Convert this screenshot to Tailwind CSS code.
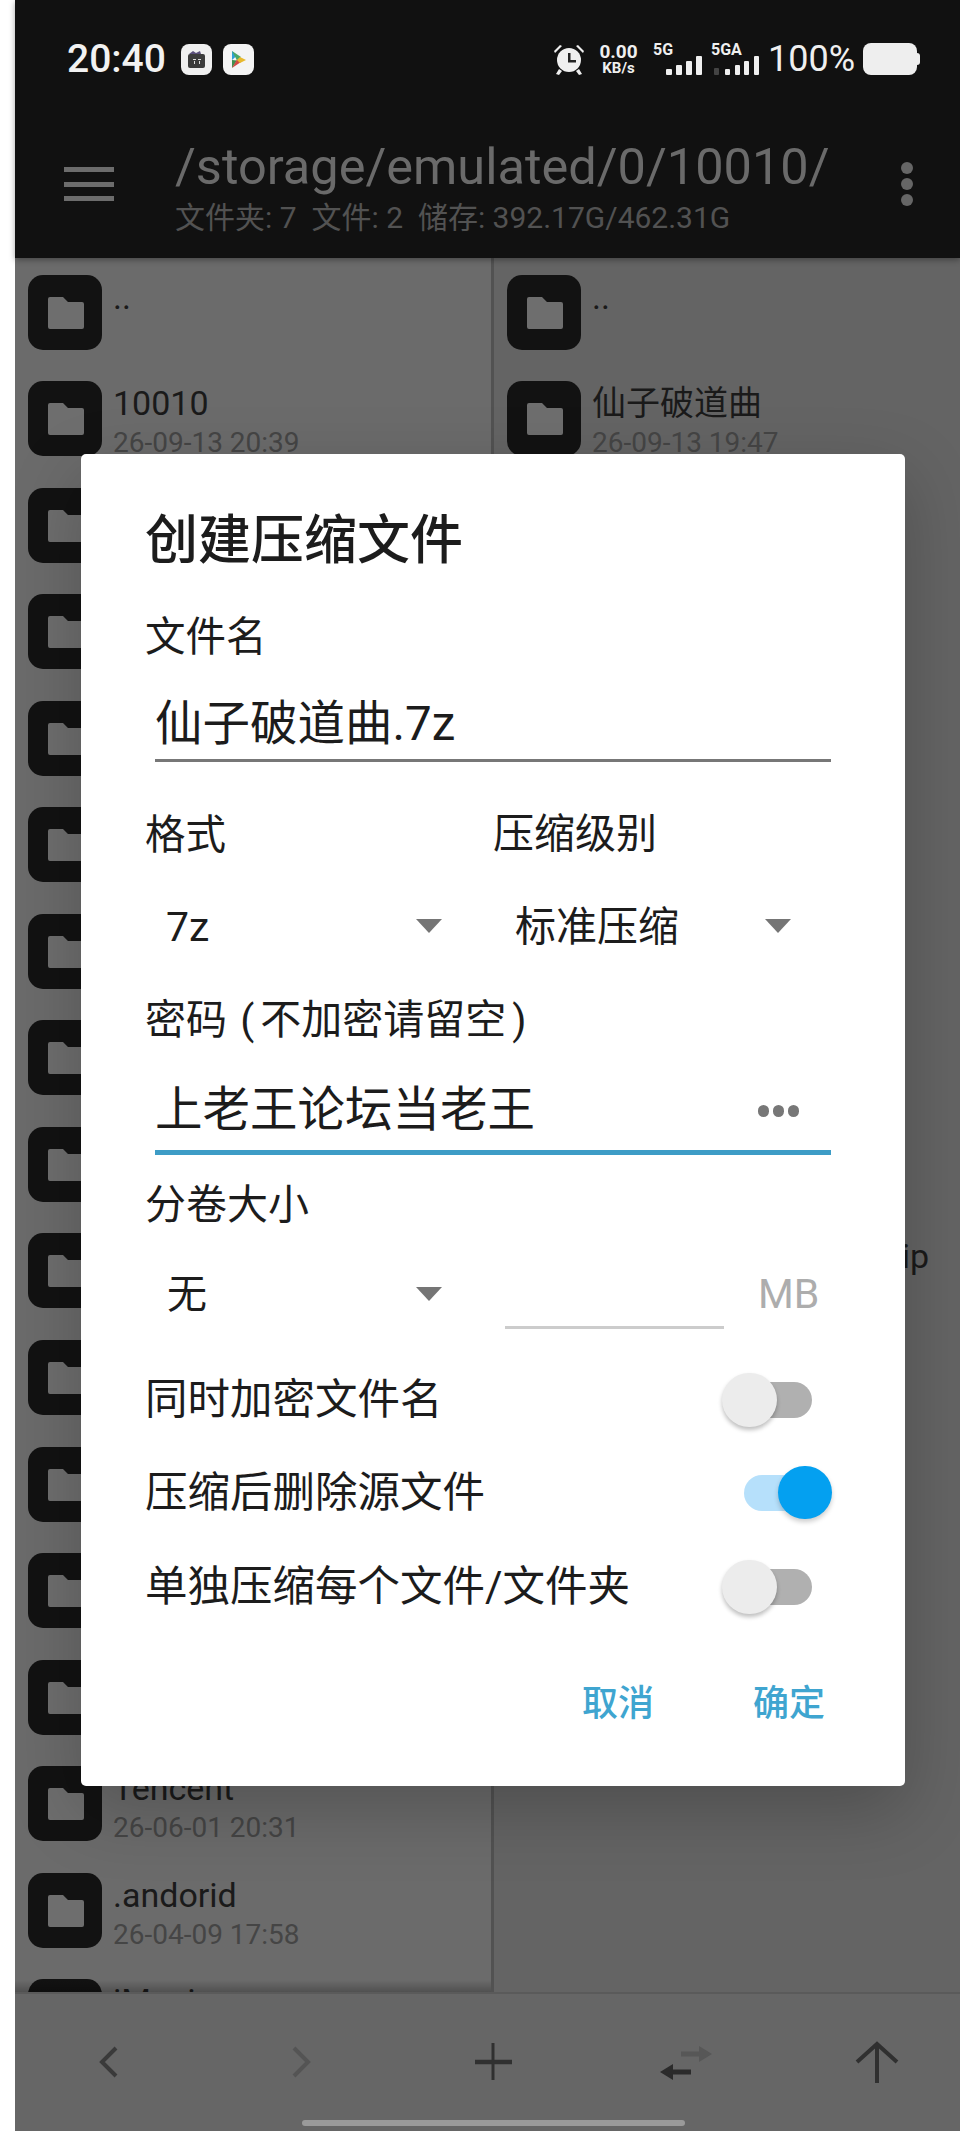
<!DOCTYPE html>
<html lang="zh-CN">
<head>
<meta charset="utf-8">
<script src="https://cdn.jsdelivr.net/npm/@tailwindcss/browser@4"></script>
</head>
<body class="bg-white">
<svg class="hidden"><defs>
<symbol id="fd" viewBox="0 0 74 75"><rect width="74" height="75" rx="15" fill="#121212"/><path d="M20 24a2 2 0 0 1 2-2h13l5 5h14a2 2 0 0 1 2 2v23a2 2 0 0 1-2 2H22a2 2 0 0 1-2-2z" fill="#6e6e6e"/></symbol>
</defs></svg>
<div class="relative w-[960px] h-[2131px] overflow-hidden bg-white font-['Roboto','Noto_Sans_CJK_SC',sans-serif]">
  <div class="ml-[15px] h-full flex flex-col bg-[#666666]">
    <!-- header -->
    <header class="h-[258px] shrink-0 bg-[#111111] z-10 shadow-[0_2px_6px_rgba(0,0,0,0.35)]">
      <div class="flex items-center justify-between pt-[43px] pl-[52px] pr-[40px] h-[75px]">
        <div class="flex items-center">
          <span class="text-[39px] leading-[32px] font-medium text-[#f2f2f2] w-[114px]">20:40</span>
          <div class="w-[31px] h-[31px] rounded-lg bg-[#f0f0f0] flex items-center justify-center">
            <svg width="23" height="23" viewBox="0 0 23 23"><path d="M4 6l4-3 3 2 4-2 1 3z" fill="#5a4f7a"/><rect x="3" y="6" width="17" height="14" rx="2" fill="#3c3c3c"/><path d="M8 11h3v1H8zM13 11h3v1h-3zM9 13h1v3H9zM14 13h1v3h-1z" fill="#ddd"/></svg>
          </div>
          <div class="w-[31px] h-[31px] rounded-lg bg-[#f4f4f4] ml-[11px] flex items-center justify-center">
            <svg width="23" height="23" viewBox="0 0 23 23"><path d="M5 3v9l5-4.500z" fill="#2f9fd6"/><path d="M5 12v8l5-7.500z" fill="#3f8f4f"/><path d="M5 3l9 6-4 3.500z" fill="#4aa768"/><path d="M5 20l9-6-4-2.500z" fill="#d24a43"/><path d="M13 9l6 3-6 3-3-3z" fill="#e8b92e"/></svg>
          </div>
        </div>
        <div class="flex items-center text-[#efefef]">
          <svg width="32" height="33" viewBox="0 0 32 33" fill="#efefef"><path d="M1 8l6-6 2 1-7 7zM31 8l-6-6-2 1 7 7z"/><circle cx="16" cy="17" r="12"/><path d="M6 26l-3 5 3 1 3-4zM26 26l3 5-3 1-3-4z"/><path d="M15 10h2.500v7H23v2.500h-8z" fill="#222"/></svg>
          <div class="ml-[13px] w-[41px] flex flex-col items-center font-bold">
            <span class="text-[19px] leading-[18px]">0.00</span>
            <span class="text-[15px] leading-[14px]">KB/s</span>
          </div>
          <div class="relative ml-[14px] w-[49px] h-[32px]">
            <span class="absolute left-0 top-0 text-[16px] leading-[14px] font-bold">5G</span>
            <svg class="absolute left-[12px] top-[13px]" width="37" height="19" viewBox="0 0 37 19" fill="#efefef"><rect x="1" y="13" width="6" height="6" rx="1"/><rect x="11" y="9" width="6" height="10" rx="1"/><rect x="21" y="5" width="6" height="14" rx="1"/><rect x="31" y="0" width="6" height="19" rx="1"/></svg>
          </div>
          <div class="relative ml-[9px] w-[49px] h-[32px]">
            <span class="absolute left-0 top-0 text-[16px] leading-[14px] font-bold">5GA</span>
            <svg class="absolute left-0 top-[13px]" width="49" height="19" viewBox="0 0 49 19" fill="#efefef"><rect x="3" y="12" width="5" height="7" rx="1" fill="#444"/><rect x="14" y="13" width="5" height="6" rx="1"/><rect x="24" y="9" width="5" height="10" rx="1"/><rect x="33" y="5" width="5" height="14" rx="1"/><rect x="43" y="0" width="5" height="19" rx="1"/></svg>
          </div>
          <span class="ml-[8px] text-[36px] leading-[32px] w-[85px] whitespace-nowrap">100%</span>
          <div class="ml-[10px] flex items-center">
            <div class="w-[54px] h-[32px] rounded-[8px] bg-[#eeeeee]"></div>
            <div class="w-[3px] h-[12px] rounded-r-sm bg-[#eeeeee]"></div>
          </div>
        </div>
      </div>
      <div class="flex items-start mt-[64px] pl-[49px]">
        <div class="w-[50px] mt-[28px] flex flex-col gap-[9.500px] shrink-0">
          <div class="h-[5px] bg-[#6c6c6c]"></div>
          <div class="h-[5px] bg-[#6c6c6c]"></div>
          <div class="h-[5px] bg-[#6c6c6c]"></div>
        </div>
        <div class="ml-[61px] w-[720px]">
          <div class="text-[50.500px] leading-[56px] text-[#6a6a6a] whitespace-nowrap">/storage/emulated/0/10010/</div>
          <div class="mt-[6px] text-[30px] leading-[34px] text-[#525252] whitespace-pre">文件夹: 7  文件: 2  储存: 392.17G/462.31G</div>
        </div>
        <div class="mt-[23px] ml-[6px] flex flex-col gap-[4px]">
          <div class="w-[12px] h-[12px] rounded-full bg-[#666666]"></div>
          <div class="w-[12px] h-[12px] rounded-full bg-[#666666]"></div>
          <div class="w-[12px] h-[12px] rounded-full bg-[#666666]"></div>
        </div>
      </div>
    </header>

    <!-- panels -->
    <div class="h-[1734px] shrink-0 flex relative">
      <div class="w-[476px] bg-[#6b6b6b] overflow-hidden pt-[16.500px] pl-[13px] relative">
        <div class="h-[106.550px] flex"><svg width="74" height="75" class="shrink-0"><use href="#fd"/></svg><div class="ml-[11px]"><div class="text-[34px] leading-[44px] text-[#1a1a1a]">..</div></div></div>
        <div class="h-[106.550px] flex"><svg width="74" height="75" class="shrink-0"><use href="#fd"/></svg><div class="ml-[11px]"><div class="text-[34px] leading-[44px] text-[#1a1a1a]">10010</div><div class="text-[28px] leading-[36px] text-[#454545]">26-09-13 20:39</div></div></div>
        <div class="h-[106.550px]"><svg width="74" height="75"><use href="#fd"/></svg></div>
        <div class="h-[106.550px]"><svg width="74" height="75"><use href="#fd"/></svg></div>
        <div class="h-[106.550px]"><svg width="74" height="75"><use href="#fd"/></svg></div>
        <div class="h-[106.550px]"><svg width="74" height="75"><use href="#fd"/></svg></div>
        <div class="h-[106.550px]"><svg width="74" height="75"><use href="#fd"/></svg></div>
        <div class="h-[106.550px]"><svg width="74" height="75"><use href="#fd"/></svg></div>
        <div class="h-[106.550px]"><svg width="74" height="75"><use href="#fd"/></svg></div>
        <div class="h-[106.550px]"><svg width="74" height="75"><use href="#fd"/></svg></div>
        <div class="h-[106.550px]"><svg width="74" height="75"><use href="#fd"/></svg></div>
        <div class="h-[106.550px]"><svg width="74" height="75"><use href="#fd"/></svg></div>
        <div class="h-[106.550px]"><svg width="74" height="75"><use href="#fd"/></svg></div>
        <div class="h-[106.550px]"><svg width="74" height="75"><use href="#fd"/></svg></div>
        <div class="h-[106.550px] flex"><svg width="74" height="75" class="shrink-0"><use href="#fd"/></svg><div class="ml-[11px]"><div class="text-[34px] leading-[44px] text-[#1a1a1a]">Tencent</div><div class="text-[28px] leading-[36px] text-[#454545]">26-06-01 20:31</div></div></div>
        <div class="h-[106.550px] flex"><svg width="74" height="75" class="shrink-0"><use href="#fd"/></svg><div class="ml-[11px]"><div class="text-[34px] leading-[44px] text-[#1a1a1a]">.andorid</div><div class="text-[28px] leading-[36px] text-[#454545]">26-04-09 17:58</div></div></div>
        <div class="h-[106.550px] flex"><svg width="74" height="75" class="shrink-0"><use href="#fd"/></svg><div class="ml-[11px]"><div class="text-[34px] leading-[44px] text-[#1a1a1a]">iMusic</div></div></div>
        <div class="absolute left-0 right-0 bottom-0 h-[12px] bg-gradient-to-b from-transparent to-black/25"></div>
      </div>
      <div class="w-[3px] bg-[#525252]"></div>
      <div class="flex-1 bg-[#646464] overflow-hidden pt-[16.500px] pl-[13px]">
        <div class="h-[106.550px] flex"><svg width="74" height="75" class="shrink-0"><use href="#fd"/></svg><div class="ml-[11px]"><div class="text-[34px] leading-[44px] text-[#1a1a1a]">..</div></div></div>
        <div class="h-[106.550px] flex"><svg width="74" height="75" class="shrink-0"><use href="#fd"/></svg><div class="ml-[11px]"><div class="text-[34px] leading-[44px] text-[#1a1a1a]">仙子破道曲</div><div class="text-[28px] leading-[36px] text-[#454545]">26-09-13 19:47</div></div></div>
        <div class="h-[746px]"></div>
        <div class="h-[44px] pr-[31px] text-right text-[34px] leading-[44px] text-[#1a1a1a] whitespace-nowrap">仙子破道曲.zip</div>
      </div>
    </div>

    <!-- bottom bar -->
    <div class="flex-1 bg-[#666666] border-t-2 border-[#5a5a5a] z-10">
      <div class="flex justify-between pt-[47px] pl-[72px] pr-[61px]">
        <svg width="44" height="44" viewBox="0 0 44 44" fill="none" stroke="#3a3a3a" stroke-width="4"><path d="M29 7L15 21l14 14"/></svg>
        <svg width="44" height="44" viewBox="0 0 44 44" fill="none" stroke="#545454" stroke-width="4"><path d="M15 7l14 14-14 14"/></svg>
        <svg width="44" height="44" viewBox="0 0 44 44" fill="none" stroke="#303030"><path d="M4 21h37" stroke-width="4.500"/><path d="M22 2v37" stroke-width="3"/></svg>
        <svg class="overflow-visible" width="44" height="44" viewBox="0 0 44 44"><path d="M18 10.500h18V5l13 8-13 8v-5.500H18z" fill="#575757"/><path d="M28 28.500H10V23l-13 8 13 8v-5.500h18z" fill="#2b2b2b"/></svg>
        <svg width="44" height="44" viewBox="0 0 44 44" fill="none" stroke="#303030" stroke-width="4"><path d="M2 21L22 3l20 18"/><path d="M22 3v39"/></svg>
      </div>
      <div class="mt-[35px] ml-[287px] w-[383px] h-[6px] rounded-full bg-[#9a9a9a]"></div>
    </div>
  </div>

  <!-- dialog overlay -->
  <div class="absolute left-[81px] top-[454px] w-[824px] h-[1332px] rounded-[5px] bg-white px-[64px] pt-[53px] text-[#1c1c1c] shadow-[0_24px_70px_rgba(0,0,0,0.22)]">
    <div class="h-[68px] flex items-center text-[53px] leading-none font-medium">创建压缩文件</div>
    <div class="mt-[37px] h-[50px] flex items-center text-[40.500px]">文件名</div>
    <div class="ml-[10px] w-[676px] pt-[38px] pb-[9px] border-b-[3px] border-[#777777]">
      <div class="h-[50px] flex items-center text-[47.500px] leading-none">仙子破道曲.7z</div>
    </div>
    <div class="mt-[48px] h-[50px] flex items-center text-[40.500px]">
      <span class="w-[348px]">格式</span><span class="text-[41px]">压缩级别</span>
    </div>
    <div class="mt-[43px] h-[50px] flex items-center text-[41px]">
      <span class="ml-[21px] w-[250px]">7z</span>
      <svg class="mb-[4px]" width="26" height="14" viewBox="0 0 26 14"><path d="M0 0h26L13 14z" fill="#757575"/></svg>
      <span class="ml-[73px] w-[250px] whitespace-nowrap">标准压缩</span>
      <svg class="mb-[4px]" width="26" height="14" viewBox="0 0 26 14"><path d="M0 0h26L13 14z" fill="#757575"/></svg>
    </div>
    <div class="mt-[43px] h-[50px] flex items-center text-[41px] whitespace-pre">密码 <span class="ml-[3px] mr-[6px]">(</span>不加密请留空<span class="ml-[6px]">)</span></div>
    <div class="mt-[40px] h-[50px] ml-[10px] w-[676px] flex items-center justify-between pr-[32px]">
      <span class="text-[47.500px] leading-none">上老王论坛当老王</span>
      <span class="flex gap-[3.500px]"><i class="block w-[11.500px] h-[11.500px] rounded-full bg-[#777777]"></i><i class="block w-[11.500px] h-[11.500px] rounded-full bg-[#777777]"></i><i class="block w-[11.500px] h-[11.500px] rounded-full bg-[#777777]"></i></span>
    </div>
    <div class="mt-[14px] ml-[10px] w-[676px] h-[5px] bg-[#3d9cc6]"></div>
    <div class="mt-[26px] h-[50px] flex items-center text-[41px]">分卷大小</div>
    <div class="mt-[37px] h-[50px] flex items-start text-[40px]">
      <span class="ml-[22px] mt-[2px] w-[249px] leading-[50px]">无</span>
      <svg class="mt-[19px]" width="26" height="14" viewBox="0 0 26 14"><path d="M0 0h26L13 14z" fill="#757575"/></svg>
      <div class="ml-[63px] mt-[58px] w-[219px] h-[3px] bg-[#cccccc]"></div>
      <span class="ml-[34px] mt-[1px] text-[41px] leading-[50px] text-[#adadad]">MB</span>
    </div>
    <div class="mt-[57px] h-[50px] flex items-center justify-between text-[42.500px] whitespace-nowrap">
      <span>同时加密文件名</span>
      <div class="relative w-[90px] h-[54px] mr-[29px] shrink-0">
        <div class="absolute left-[20px] right-0 top-[9px] h-[36px] rounded-full bg-[#b0b0b0]"></div>
        <div class="absolute left-0 top-0 w-[55px] h-[54px] rounded-full bg-[#ececec] shadow-[0_3px_4px_rgba(0,0,0,0.25)]"></div>
      </div>
    </div>
    <div class="mt-[43px] h-[50px] flex items-center justify-between text-[42.500px] whitespace-nowrap">
      <span>压缩后删除源文件</span>
      <div class="relative w-[88px] h-[54px] mr-[9px] shrink-0">
        <div class="absolute left-0 right-[20px] top-[9px] h-[36px] rounded-full bg-[#b6e0fb]"></div>
        <div class="absolute right-0 top-0 w-[54px] h-[53px] rounded-full bg-[#04a0f0] shadow-[0_3px_5px_rgba(0,0,0,0.2)]"></div>
      </div>
    </div>
    <div class="mt-[44px] h-[50px] flex items-center justify-between text-[42.500px] whitespace-nowrap">
      <span>单独压缩每个文件/文件夹</span>
      <div class="relative w-[90px] h-[54px] mr-[29px] shrink-0">
        <div class="absolute left-[20px] right-0 top-[9px] h-[36px] rounded-full bg-[#b0b0b0]"></div>
        <div class="absolute left-0 top-0 w-[55px] h-[54px] rounded-full bg-[#ececec] shadow-[0_3px_4px_rgba(0,0,0,0.25)]"></div>
      </div>
    </div>
    <div class="mt-[67px] h-[50px] flex items-center justify-end gap-[99px] pr-[16px] text-[36px] font-medium text-[#3fa5d0]">
      <span>取消</span><span>确定</span>
    </div>
  </div>
</div>
</body>
</html>
